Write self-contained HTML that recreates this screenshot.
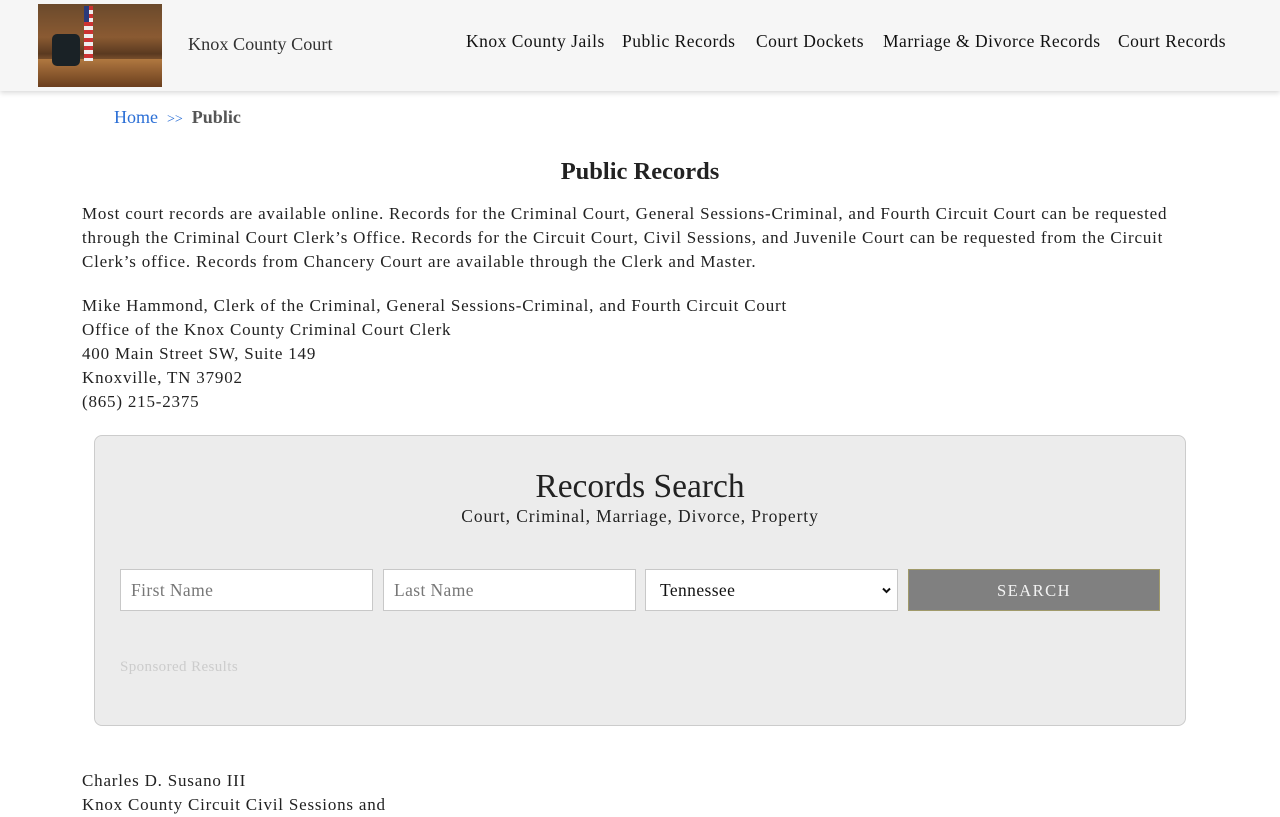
<!DOCTYPE html>
<html><head><meta charset="utf-8"><style>
*{box-sizing:border-box;margin:0;padding:0}
html,body{width:1280px;height:800px;overflow:hidden}
body{background:#fff;font-family:"Liberation Serif",serif;color:#222}
.hdr{position:absolute;left:0;top:0;width:1280px;height:91px;background:#f6f6f6;box-shadow:0 2px 5px rgba(0,0,0,.15)}
.logo{position:absolute;left:38px;top:4px;width:124px;height:83px;overflow:hidden;background:linear-gradient(180deg,#6b4a2c 0%,#8a5a32 40%,#5a3a20 60%,#a0683a 75%,#6a4020 100%)}
.chair{position:absolute;left:14px;top:30px;width:28px;height:32px;background:#1a2226;border-radius:5px}
.flag{position:absolute;left:46px;top:2px;width:9px;height:55px;background:repeating-linear-gradient(180deg,#c33 0 4px,#eee 4px 8px)}
.flag:before{content:"";position:absolute;left:0;top:0;width:5px;height:16px;background:#2a3a7a}
.desk{position:absolute;left:0;top:55px;width:124px;height:28px;background:linear-gradient(180deg,#b07840,#6a3e1e)}
.brand{position:absolute;left:188px;top:34px;font-size:18.2px;color:#333}
.nav{position:absolute;top:31px;font-size:17.5px;letter-spacing:0.5px;color:#111}
.bc{position:absolute;left:114px;top:107px;font-size:18px}
.bc a{color:#2b6fd6;text-decoration:none}
h1{position:absolute;left:0;width:1280px;top:158px;text-align:center;font-size:24.5px;font-weight:bold;color:#222}
.p{position:absolute;left:82px;font-size:17px;letter-spacing:0.8px;line-height:24px;color:#222;white-space:nowrap}
.box{position:absolute;left:94px;top:435px;width:1092px;height:291px;background:#ececec;border:1px solid #ccc;border-radius:8px}
.box h2{position:absolute;left:0;width:100%;top:32px;text-align:center;font-weight:normal;font-size:33.5px;color:#222}
.box .sub{position:absolute;left:0;width:100%;top:70px;text-align:center;font-size:17.5px;letter-spacing:0.9px}
.in{position:absolute;top:133px;width:253px;height:42px;background:#fff;border:1px solid #c8c8c8;font-size:17.5px;letter-spacing:0.4px;color:#777;padding:10px}
.sel{color:#111;padding-left:14px}
.btn{position:absolute;left:813px;top:133px;width:252px;height:42px;background:#808080;border:1px solid #a09a6a;color:#f2f2f2;font-size:16.5px;letter-spacing:1.5px;text-align:center;line-height:42px}
.spon{position:absolute;left:25px;top:223px;font-size:15px;letter-spacing:0.4px;color:#ccc}
</style></head><body>
<div class="hdr">
 <div class="logo"><div class="desk"></div><div class="chair"></div><div class="flag"></div></div>
 <div class="brand">Knox County Court</div>
 <div class="nav" style="left:466px">Knox County Jails</div>
 <div class="nav" style="left:622px">Public Records</div>
 <div class="nav" style="left:756px">Court Dockets</div>
 <div class="nav" style="left:883px">Marriage &amp; Divorce Records</div>
 <div class="nav" style="left:1118px">Court Records</div>
</div>
<div class="bc"><a>Home</a>&nbsp;&nbsp;<span style="color:#2b6fd6;font-size:14px">&gt;&gt;</span>&nbsp;&nbsp;<b style="color:#555">Public</b></div>
<h1>Public Records</h1>
<div class="p" style="top:202px">Most court records are available online. Records for the Criminal Court, General Sessions-Criminal, and Fourth Circuit Court can be requested<br>through the Criminal Court Clerk’s Office. Records for the Circuit Court, Civil Sessions, and Juvenile Court can be requested from the Circuit<br>Clerk’s office. Records from Chancery Court are available through the Clerk and Master.</div>
<div class="p" style="top:294px">Mike Hammond, Clerk of the Criminal, General Sessions-Criminal, and Fourth Circuit Court<br>Office of the Knox County Criminal Court Clerk<br>400 Main Street SW, Suite 149<br>Knoxville, TN 37902<br>(865) 215-2375</div>
<div class="box">
 <h2>Records Search</h2>
 <div class="sub">Court, Criminal, Marriage, Divorce, Property</div>
 <div class="in" style="left:25px">First Name</div>
 <div class="in" style="left:288px">Last Name</div>
 <div class="in sel" style="left:550px">Tennessee<svg style="position:absolute;right:6px;top:17px" width="9" height="7" viewBox="0 0 9 7"><path d="M1 1.5L4.5 5L8 1.5" stroke="#111" stroke-width="2" fill="none"/></svg></div>
 <div class="btn">SEARCH</div>
 <div class="spon">Sponsored Results</div>
</div>
<div class="p" style="top:769px">Charles D. Susano III<br>Knox County Circuit Civil Sessions and</div>
</body></html>
